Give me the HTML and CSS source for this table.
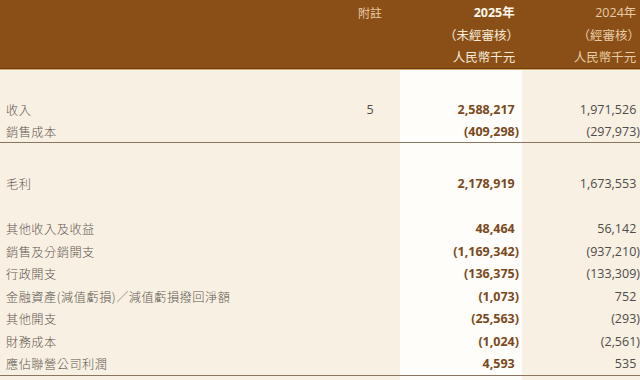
FILE: index.html
```html
<!DOCTYPE html>
<html lang="zh-Hant">
<head>
<meta charset="utf-8">
<link rel="stylesheet" href="styles.css">
</head>
<body>
<div class="statement">
  <div class="head">
    <div class="h-label"></div>
    <div class="h-note"><div class="hl">附註</div></div>
    <div class="h-cur">
      <div class="hl strong">2025年<span class="pad">)</span></div>
      <div class="hl">（未經審核）</div>
      <div class="hl">人民幣千元<span class="pad">)</span></div>
    </div>
    <div class="h-prev">
      <div class="hl">2024年<span class="pad">)</span></div>
      <div class="hl">（經審核）</div>
      <div class="hl">人民幣千元<span class="pad">)</span></div>
    </div>
  </div>
  <div class="body">
    <div class="section s1">
      <div class="row"><div class="label">收入</div><div class="note">5</div><div class="cur">2,588,217<span class="pad">)</span></div><div class="prev">1,971,526<span class="pad">)</span></div></div>
      <div class="row"><div class="label">銷售成本</div><div class="note"></div><div class="cur">(409,298)</div><div class="prev">(297,973)</div></div>
    </div>
    <div class="section s2">
      <div class="row"><div class="label">毛利</div><div class="note"></div><div class="cur">2,178,919<span class="pad">)</span></div><div class="prev">1,673,553<span class="pad">)</span></div></div>
    </div>
    <div class="section s3">
      <div class="row"><div class="label">其他收入及收益</div><div class="note"></div><div class="cur">48,464<span class="pad">)</span></div><div class="prev">56,142<span class="pad">)</span></div></div>
      <div class="row"><div class="label">銷售及分銷開支</div><div class="note"></div><div class="cur">(1,169,342)</div><div class="prev">(937,210)</div></div>
      <div class="row"><div class="label">行政開支</div><div class="note"></div><div class="cur">(136,375)</div><div class="prev">(133,309)</div></div>
      <div class="row"><div class="label">金融資產(減值虧損)／減值虧損撥回淨額</div><div class="note"></div><div class="cur">(1,073)</div><div class="prev">752<span class="pad">)</span></div></div>
      <div class="row"><div class="label">其他開支</div><div class="note"></div><div class="cur">(25,563)</div><div class="prev">(293)</div></div>
      <div class="row"><div class="label">財務成本</div><div class="note"></div><div class="cur">(1,024)</div><div class="prev">(2,561)</div></div>
      <div class="row"><div class="label">應佔聯營公司利潤</div><div class="note"></div><div class="cur">4,593<span class="pad">)</span></div><div class="prev">535<span class="pad">)</span></div></div>
    </div>
  </div>
</div>
</body>
</html>
```

FILE: styles.css
```css
html, body {
  margin: 0;
  padding: 0;
}
body {
  width: 640px;
  height: 380px;
  overflow: hidden;
  background: #f8f0e3;
  font-family: "Open Sans", "Noto Sans CJK TC", sans-serif;
  font-size: 12.5px;
}
.statement {
  width: 640px;
}
.head {
  display: grid;
  grid-template-columns: 1fr 60px 122px 118px;
  background: #8a4f16;
  height: 69px;
  padding-top: 2px;
  box-sizing: border-box;
  border-bottom: 1px solid #6e3d0e;
  box-shadow: 0 1px 0 #d9a56c;
  color: #e6cba5;
}
.hl {
  line-height: 22.5px;
  white-space: nowrap;
}
.h-note {
  text-align: center;
  font-family: "Noto Sans CJK TC", sans-serif;
  font-size: 12px;
}
.h-cur {
  text-align: right;
  padding-right: 3px;
  color: #f6ead8;
}
.h-cur .strong {
  font-weight: 700;
  color: #fff8ec;
}
.h-prev {
  text-align: right;
  padding-right: 0;
}
.pad {
  visibility: hidden;
}
.body {
  margin-top: 1px;
  background: linear-gradient(to left, transparent 118px, #fefdfa 118px, #fefdfa 240px, transparent 240px);
  min-height: 320px;
}
.section {
  border-bottom: 1px solid #8b7560;
}
.s1 {
  padding-top: 28px;
}
.s2 {
  padding-top: 29px;
  padding-bottom: 23px;
  border-bottom: none;
}
.row {
  display: grid;
  grid-template-columns: 1fr 60px 122px 118px;
  white-space: nowrap;
  box-sizing: border-box;
  padding-top: 1px;
}
.s1 .row, .s2 .row {
  height: 22px;
  line-height: 22px;
}
.s3 .row {
  height: 22.5px;
  line-height: 22.5px;
}
.label {
  padding-left: 6px;
  font-family: "Noto Sans CJK TC", sans-serif;
  font-size: 12.2px;
  font-weight: 300;
  letter-spacing: 0.5px;
  color: #5e5650;
}
.note {
  text-align: center;
  color: #4f4a45;
}
.cur {
  text-align: right;
  padding-right: 3px;
  font-weight: 700;
  color: #7a4a1c;
}
.prev {
  text-align: right;
  padding-right: 0;
  color: #4f4b48;
}
```
